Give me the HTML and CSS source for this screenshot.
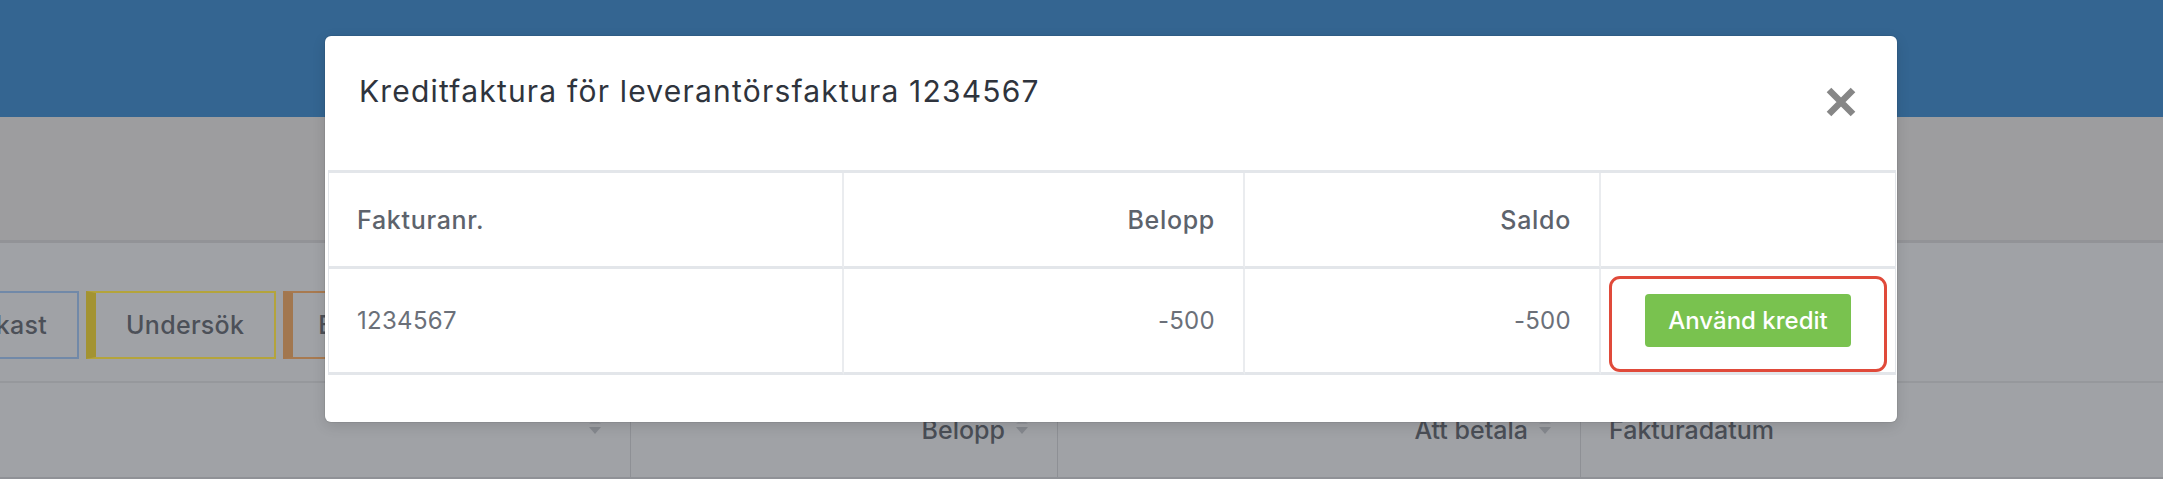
FILE: index.html
```html
<!DOCTYPE html>
<html lang="sv">
<head>
<meta charset="utf-8">
<title>Kreditfaktura</title>
<link rel="stylesheet" href="styles.css">
</head>
<body>
<div class="page">
  <header class="topbar"></header>
  <div class="subbar"></div>
  <div class="toolbar">
    <button class="tbtn tbtn-blue">Utkast</button>
    <button class="tbtn tbtn-yellow">Undersök</button>
    <button class="tbtn tbtn-orange">Bokför</button>
  </div>
  <div class="list-head">
    <div class="lh-col lh-c0"><svg class="sort" viewBox="0 0 14 18"><path d="M7 1 L13 7 L1 7 Z" fill="#93969b"/><path d="M1 10 L13 10 L7 17 Z" fill="#85888e"/></svg></div>
    <div class="lh-col lh-c1">Belopp<svg class="sort" viewBox="0 0 14 18"><path d="M7 1 L13 7 L1 7 Z" fill="#93969b"/><path d="M1 10 L13 10 L7 17 Z" fill="#85888e"/></svg></div>
    <div class="lh-col lh-c2">Att betala<svg class="sort" viewBox="0 0 14 18"><path d="M7 1 L13 7 L1 7 Z" fill="#93969b"/><path d="M1 10 L13 10 L7 17 Z" fill="#85888e"/></svg></div>
    <div class="lh-col lh-c3">Fakturadatum</div>
  </div>
</div>

<div class="modal">
  <div class="modal-header">
    <h2 class="modal-title">Kreditfaktura för leverantörsfaktura 1234567</h2>
    <button class="modal-close" aria-label="Stäng">
      <svg viewBox="0 0 32 30" width="32" height="30"><path d="M4 3 L28 27 M28 3 L4 27" stroke="#868686" stroke-width="6.5" stroke-linecap="butt" fill="none"/></svg>
    </button>
  </div>
  <div class="modal-body">
    <table class="credit-table">
      <colgroup>
        <col class="c-nr"><col class="c-amt"><col class="c-bal"><col class="c-act">
      </colgroup>
      <thead>
        <tr><th>Fakturanr.</th><th class="num">Belopp</th><th class="num">Saldo</th><th></th></tr>
      </thead>
      <tbody>
        <tr>
          <td>1234567</td>
          <td class="num">-500</td>
          <td class="num">-500</td>
          <td class="action"><button class="btn-credit">Använd kredit</button><span class="highlight"></span></td>
        </tr>
      </tbody>
    </table>
  </div>
</div>
</body>
</html>
```

FILE: styles.css
```css
html, body {
  margin: 0;
  padding: 0;
}
body {
  width: 2163px;
  height: 479px;
  overflow: hidden;
  position: relative;
  background: #a0a2a6;
  font-family: "Inter", "Open Sans", sans-serif;
}

/* dimmed page behind the modal */
.topbar {
  height: 117px;
  background: #346591;
}
.subbar {
  height: 123px;
  background: #9d9d9f;
  border-bottom: 3px solid #929397;
}
.toolbar {
  box-sizing: border-box;
  height: 140px;
  padding-top: 48px;
  display: flex;
  align-items: flex-start;
  gap: 7px;
  border-bottom: 2px solid #96989c;
}
.tbtn {
  height: 68px;
  box-sizing: border-box;
  background: transparent;
  border: 2px solid;
  border-left-width: 10px;
  padding: 0 30px;
  font-family: inherit;
  font-size: 25px;
  font-weight: 500;
  letter-spacing: 0.3px;
  color: #4c5058;
}
.tbtn-blue {
  margin-left: -72px;
  border-color: #7189a8;
}
.tbtn-yellow {
  border-color: #b4a43c;
  border-left-color: #a39332;
}
.tbtn-orange {
  padding-left: 25px;
  border-color: #a87a50;
  border-left-color: #a2774f;
}
.list-head {
  box-sizing: border-box;
  height: 96px;
  padding-bottom: 8px;
  display: flex;
  border-bottom: 2px solid #8f9196;
  font-size: 25px;
  font-weight: 500;
  color: #4a4e56;
}
.lh-col {
  box-sizing: border-box;
  display: flex;
  align-items: center;
  justify-content: flex-end;
  gap: 10px;
  padding: 0 28px;
  border-right: 1px solid #8e9095;
  margin-bottom: -8px;
}
.lh-c0 { width: 631px; }
.lh-c1 { width: 427px; }
.lh-c2 { width: 523px; }
.lh-c3 { flex: 1; justify-content: flex-start; border-right: 0; }
.sort {
  width: 14px;
  height: 18px;
}
.lh-col .sort { margin-bottom: 8px; }

/* modal */
.modal {
  position: absolute;
  left: 325px;
  top: 36px;
  width: 1572px;
  height: 386px;
  box-sizing: border-box;
  background: #ffffff;
  border-radius: 6px;
  box-shadow: 0 0 0 1px rgba(0, 0, 0, 0.06), 0 4px 14px rgba(0, 0, 0, 0.12);
}
.modal-header {
  height: 134px;
  box-sizing: border-box;
  display: flex;
  align-items: flex-start;
  justify-content: space-between;
  padding: 37px 40px 0 34px;
}
.modal-title {
  margin: 0;
  font-size: 30px;
  line-height: 36px;
  letter-spacing: 1.2px;
  font-weight: 400;
  color: #2f343d;
}
.modal-close {
  margin-top: 14px;
  width: 32px;
  height: 30px;
  padding: 0;
  border: 0;
  background: none;
  display: flex;
}
.modal-body {
  padding: 0 3px;
}
.credit-table {
  width: 1566px;
  table-layout: fixed;
  border-collapse: separate;
  border-spacing: 0;
  border-top: 3px solid #e3e6ea;
  border-left: 1px solid #e3e6ea;
  border-right: 1px solid #e3e6ea;
}
.c-nr { width: 515px; }
.c-amt { width: 401px; }
.c-bal { width: 356px; }
.c-act { width: 294px; }

.credit-table th,
.credit-table td {
  padding: 0 28px;
  text-align: left;
  vertical-align: middle;
  border-bottom: 3px solid #e3e6ea;
  border-right: 2px solid #eaecef;
  font-size: 24px;
  line-height: 28px;
}
.credit-table th:last-child,
.credit-table td:last-child {
  border-right: 0;
}
.credit-table th {
  height: 96px;
  box-sizing: border-box;
  font-size: 25px;
  letter-spacing: 0.7px;
  font-weight: 500;
  color: #5d636c;
}
.credit-table td {
  height: 106px;
  box-sizing: border-box;
  font-weight: 400;
  letter-spacing: 0.3px;
  color: #6b7079;
}
.credit-table .num {
  text-align: right;
}
.credit-table td.action {
  position: relative;
  text-align: center;
  padding: 0;
}
.btn-credit {
  height: 53px;
  width: 206px;
  border: 0;
  border-radius: 4px;
  background: #79c24f;
  color: #ffffff;
  font-family: inherit;
  font-size: 24px;
  font-weight: 500;
  vertical-align: middle;
}
.highlight {
  position: absolute;
  left: 8px;
  right: 8px;
  top: 7px;
  bottom: 0;
  border: 3px solid #e04a3a;
  border-radius: 11px;
  pointer-events: none;
}
```
